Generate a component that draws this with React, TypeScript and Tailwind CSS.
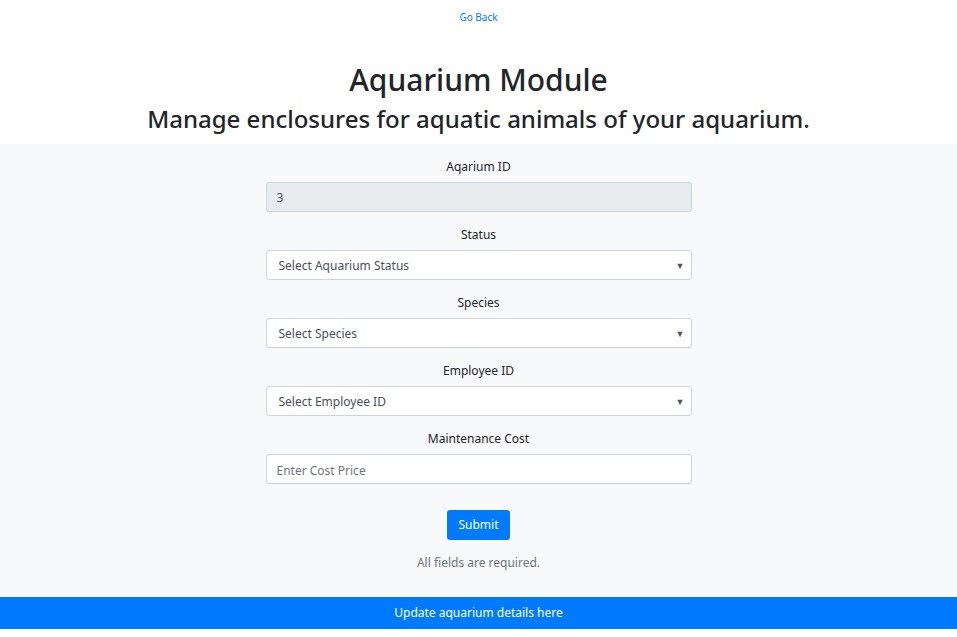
export default function App() {
  const selects = [
    { label: 'Status', placeholder: 'Select Aquarium Status' },
    { label: 'Species', placeholder: 'Select Species' },
    { label: 'Employee ID', placeholder: 'Select Employee ID' },
  ]

  return (
    <div className="font-['Noto_Sans',sans-serif] text-[#212529]">
      <div className="bg-white text-center">
        <div className="h-[30px] leading-[30px]">
          <a href="#" className="text-[10px] text-[#007bff]">Go Back</a>
        </div>
        <h1 className="mt-[32px] text-[30px] font-medium leading-[36px]">Aquarium Module</h1>
        <h3 className="mt-[5px] text-[24px] font-medium leading-[32px] pb-[9px]">
          Manage enclosures for aquatic animals of your aquarium.
        </h3>
      </div>

      <div className="bg-[#f8f9fa] pt-[13px] pb-[24px]">
        <form className="w-[426px] mx-auto flex flex-col items-center text-[12px]">
          <label className="leading-[20px] mb-[5px]">Aqarium ID</label>
          <div className="w-full h-[30px] px-[10px] pt-[2px] flex items-center rounded-[3px] border border-[#ced4da] bg-[#e9ecef] text-[#495057] mb-[13px]">
            3
          </div>

          {selects.map((s) => (
            <div key={s.label} className="w-full flex flex-col items-center">
              <label className="leading-[20px] mb-[5px]">{s.label}</label>
              <div className="w-full h-[30px] pl-[12px] pr-[6px] pt-[2px] flex items-center justify-between rounded-[3px] border border-[#ced4da] bg-white text-[#495057] mb-[13px]">
                <span>{s.placeholder}</span>
                <span className="text-[9px] text-[#555]">▼</span>
              </div>
            </div>
          ))}

          <label className="leading-[20px] mb-[5px]">Maintenance Cost</label>
          <input
            className="w-full h-[30px] px-[10px] pt-[2px] rounded-[3px] border border-[#ced4da] bg-white text-[12px] placeholder:text-[#6c757d] outline-none"
            placeholder="Enter Cost Price"
          />

          <button
            type="button"
            className="mt-[26px] h-[30px] px-[11px] rounded-[3px] bg-[#007bff] text-white text-[12px]"
          >
            Submit
          </button>
          <p className="mt-[13px] text-[#6c757d] text-[12px] leading-[20px]">All fields are required.</p>
        </form>
      </div>

      <div className="bg-[#007bff] text-white text-center text-[12px] h-[32px] flex items-center justify-center">
        Update aquarium details here
      </div>
    </div>
  )
}
